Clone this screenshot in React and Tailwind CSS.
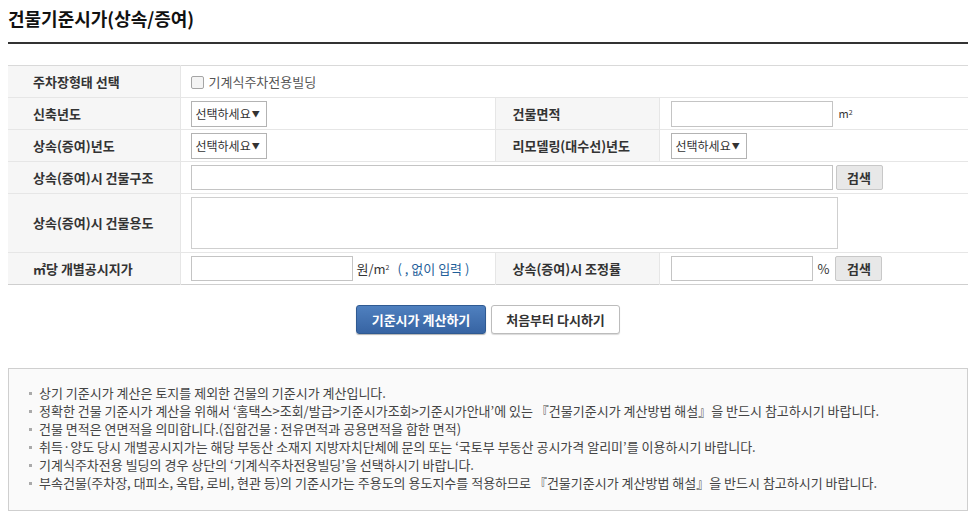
const font = { fontFamily: '"Noto Sans CJK KR", "Noto Sans", sans-serif' };

const SelectBox = () => (
  <div className="inline-flex items-center w-[76px] h-[26px] border border-[#b3b3b3] bg-white pl-[4px] text-[12px] text-[#333] align-middle whitespace-nowrap">
    <span>선택하세요</span>
    <span className="ml-[1px] text-[8px] leading-none">▼</span>
  </div>
);

const SearchButton = () => (
  <button className="h-[25px] w-[47px] border border-[#c8c8c8] rounded-[2px] bg-[#e8e8e8] text-[13px] font-bold text-[#333] align-middle">
    검색
  </button>
);

const labelCls = "bg-[#f6f6f6] text-[13px] font-bold text-[#333] text-left align-middle whitespace-nowrap";
const valueCls = "border-l border-[#e6e6e6] align-middle";

const notes = [
  "상기 기준시가 계산은 토지를 제외한 건물의 기준시가 계산입니다.",
  "정확한 건물 기준시가 계산을 위해서 ‘홈택스>조회/발급>기준시가조회>기준시가안내’에 있는 『건물기준시가 계산방법 해설』을 반드시 참고하시기 바랍니다.",
  "건물 면적은 연면적을 의미합니다.(집합건물 : 전유면적과 공용면적을 합한 면적)",
  "취득·양도 당시 개별공시지가는 해당 부동산 소재지 지방자치단체에 문의 또는 ‘국토부 부동산 공시가격 알리미’를 이용하시기 바랍니다.",
  "기계식주차전용 빌딩의 경우 상단의 ‘기계식주차전용빌딩’을 선택하시기 바랍니다.",
  "부속건물(주차장, 대피소, 옥탑, 로비, 현관 등)의 기준시가는 주용도의 용도지수를 적용하므로 『건물기준시가 계산방법 해설』을 반드시 참고하시기 바랍니다.",
];

export default function App() {
  return (
    <div className="w-[975px] min-h-[525px] bg-white px-2" style={font}>
      <div className="w-[960px]">
        <h1 className="pt-[6px] pb-[11px] border-b-2 border-[#333] text-[18px] leading-[25px] font-bold text-[#111]">
          건물기준시가(상속/증여)
        </h1>

        <table className="mt-[21px] w-[960px] table-fixed border-collapse border-t border-[#d9d9d9] border-b border-b-[#cfcfcf]">
          <colgroup>
            <col className="w-[172px]" />
            <col className="w-[315px]" />
            <col className="w-[164px]" />
            <col className="w-[309px]" />
          </colgroup>
          <tbody>
            <tr className="h-[32px] border-b border-[#e6e6e6]">
              <th className={`${labelCls} pl-[25px]`}>주차장형태 선택</th>
              <td className={`${valueCls} pl-[10px]`} colSpan={3}>
                <label className="inline-flex items-center gap-[5px] text-[13px] text-[#555]">
                  <span className="inline-block w-[13px] h-[13px] border border-[#a5a5a5] rounded-[2px] bg-[#f4f4f4]" />
                  기계식주차전용빌딩
                </label>
              </td>
            </tr>
            <tr className="h-[32px] border-b border-[#e6e6e6]">
              <th className={`${labelCls} pl-[25px]`}>신축년도</th>
              <td className={`${valueCls} pl-[10px]`}>
                <SelectBox />
              </td>
              <th className={`${labelCls} pl-[17px] border-l border-[#e6e6e6]`}>건물면적</th>
              <td className={`${valueCls} pl-[11px]`}>
                <div className="flex items-center">
                  <input className="w-[162px] h-[26px] border border-[#c4c4c4]" />
                  <span className="ml-[6px] text-[11px] text-[#333]">
                    m<sup className="text-[7px]">2</sup>
                  </span>
                </div>
              </td>
            </tr>
            <tr className="h-[32px] border-b border-[#e6e6e6]">
              <th className={`${labelCls} pl-[25px]`}>상속(증여)년도</th>
              <td className={`${valueCls} pl-[10px]`}>
                <SelectBox />
              </td>
              <th className={`${labelCls} pl-[17px] border-l border-[#e6e6e6]`}>리모델링(대수선)년도</th>
              <td className={`${valueCls} pl-[11px]`}>
                <SelectBox />
              </td>
            </tr>
            <tr className="h-[32px] border-b border-[#e6e6e6]">
              <th className={`${labelCls} pl-[25px]`}>상속(증여)시 건물구조</th>
              <td className={`${valueCls} pl-[10px]`} colSpan={3}>
                <div className="flex items-center gap-[3px]">
                  <input className="w-[642px] h-[25px] border border-[#c4c4c4]" />
                  <SearchButton />
                </div>
              </td>
            </tr>
            <tr className="h-[59px] border-b border-[#e6e6e6]">
              <th className={`${labelCls} pl-[25px]`}>상속(증여)시 건물용도</th>
              <td className={`${valueCls} pl-[10px]`} colSpan={3}>
                <textarea className="block w-[647px] h-[52px] border border-[#cfcfcf] resize-none" />
              </td>
            </tr>
            <tr className="h-[32px]">
              <th className={`${labelCls} pl-[25px]`}>㎡당 개별공시지가</th>
              <td className={`${valueCls} pl-[10px]`}>
                <div className="flex items-center text-[13px] whitespace-nowrap">
                  <input className="w-[162px] h-[25px] border border-[#c4c4c4]" />
                  <span className="ml-[4px] text-[#333]">
                    원/m<sup className="text-[7px]">2</sup>
                  </span>
                  <span className="ml-[8px] text-[#1f5f9a]">( , 없이 입력 )</span>
                </div>
              </td>
              <th className={`${labelCls} pl-[17px] border-l border-[#e6e6e6]`}>상속(증여)시 조정률</th>
              <td className={`${valueCls} pl-[11px]`}>
                <div className="flex items-center text-[13px]">
                  <input className="w-[142px] h-[25px] border border-[#c4c4c4]" />
                  <span className="ml-[5px] mr-[6px] text-[#333]">%</span>
                  <SearchButton />
                </div>
              </td>
            </tr>
          </tbody>
        </table>

        <div className="mt-[20px] flex justify-center gap-[5px]">
          <button className="w-[130px] h-[29px] rounded-[3px] border border-[#2f5a92] bg-gradient-to-b from-[#4f80bf] to-[#3764a3] text-[13px] font-bold text-white shadow-[0_1px_1px_rgba(0,0,0,0.3)]">
            기준시가 계산하기
          </button>
          <button className="w-[129px] h-[29px] rounded-[3px] border border-[#bcbcbc] bg-white text-[13px] font-bold text-[#333] shadow-[0_1px_1px_rgba(0,0,0,0.15)]">
            처음부터 다시하기
          </button>
        </div>

        <div className="mt-[34px] border border-[#cfcfcf] bg-[#fafafa] pt-[15px] pb-[18px] pl-[20px]">
          <ul className="text-[13px] leading-[18px] text-[#444]">
            {notes.map((n, i) => (
              <li key={i} className="flex items-center">
                <span className="inline-block w-[3px] h-[3px] bg-[#aaa] mr-[7px] shrink-0" />
                <span className="whitespace-nowrap">{n}</span>
              </li>
            ))}
          </ul>
        </div>
      </div>
    </div>
  );
}
